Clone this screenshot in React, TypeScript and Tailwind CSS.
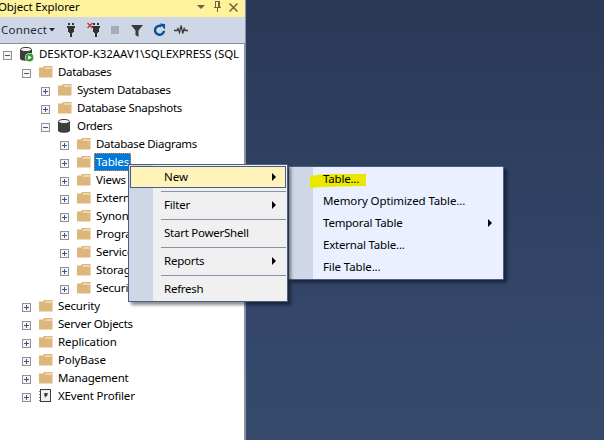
import React from "react";

type Kind = "server" | "folder" | "db" | "xe";
type Node = { label: string; depth: number; kind: Kind; open?: boolean; selected?: boolean; track: string };

const nodes: Node[] = [
  { label: "DESKTOP-K32AAV1\\SQLEXPRESS (SQL", depth: 0, kind: "server", open: true, track: "tracking-[-0.05px]" },
  { label: "Databases", depth: 1, kind: "folder", open: true, track: "tracking-[-0.35px]" },
  { label: "System Databases", depth: 2, kind: "folder", track: "tracking-[-0.3px]" },
  { label: "Database Snapshots", depth: 2, kind: "folder", track: "tracking-[-0.28px]" },
  { label: "Orders", depth: 2, kind: "db", open: true, track: "tracking-[-0.35px]" },
  { label: "Database Diagrams", depth: 3, kind: "folder", track: "tracking-[-0.3px]" },
  { label: "Tables", depth: 3, kind: "folder", selected: true, track: "tracking-[-0.15px]" },
  { label: "Views", depth: 3, kind: "folder", track: "tracking-[-0.15px]" },
  { label: "External", depth: 3, kind: "folder", track: "tracking-[-0.15px]" },
  { label: "Synonyms", depth: 3, kind: "folder", track: "tracking-[-0.15px]" },
  { label: "Program", depth: 3, kind: "folder", track: "tracking-[-0.15px]" },
  { label: "Service", depth: 3, kind: "folder", track: "tracking-[-0.15px]" },
  { label: "Storage", depth: 3, kind: "folder", track: "tracking-[-0.15px]" },
  { label: "Security", depth: 3, kind: "folder", track: "tracking-[-0.15px]" },
  { label: "Security", depth: 1, kind: "folder", track: "tracking-[-0.15px]" },
  { label: "Server Objects", depth: 1, kind: "folder", track: "tracking-[-0.25px]" },
  { label: "Replication", depth: 1, kind: "folder", track: "tracking-[-0.1px]" },
  { label: "PolyBase", depth: 1, kind: "folder", track: "tracking-[-0.1px]" },
  { label: "Management", depth: 1, kind: "folder", track: "tracking-[-0.2px]" },
  { label: "XEvent Profiler", depth: 1, kind: "xe", track: "tracking-[-0.17px]" },
];

const indent = ["pl-[3px]", "pl-[22px]", "pl-[41px]", "pl-[60px]"];

function Expander({ open }: { open?: boolean }) {
  return (
    <svg className="mt-[3px] shrink-0" width="9" height="9" viewBox="0 0 9 9" shapeRendering="crispEdges">
      <rect x=".5" y=".5" width="8" height="8" fill="#f6f6f6" stroke="#919191" />
      <path d="M2 4h5v1H2z" fill="#3b5391" />
      {!open && <path d="M4 2h1v5H4z" fill="#3b5391" />}
    </svg>
  );
}

function Cylinder() {
  return (
    <>
      <path d="M0 3.500v9c0 3 12 3 12 0v-9z" fill="#3c3c3c" />
      <ellipse cx="6" cy="3.500" rx="5.500" ry="2.100" fill="#f3f3f3" stroke="#3c3c3c" />
    </>
  );
}

function NodeIcon({ kind }: { kind: Kind }) {
  return (
    <svg className="ml-[8px] shrink-0" width="15" height="16" viewBox="0 0 15 16">
      {kind === "folder" && (
        <>
          <path d="M0 3.500h4L5 2h8.500v11.500H0z" fill="#dcb67a" />
          <path d="M5.500 4.500 6.200 3.500H13v1z" fill="#fbf3e2" />
        </>
      )}
      {kind === "db" && <Cylinder />}
      {kind === "server" && (
        <>
          <Cylinder />
          <circle cx="9.500" cy="11.500" r="4.500" fill="#fff" />
          <circle cx="9.500" cy="11.500" r="3.900" fill="#339933" />
          <path d="M8.200 9.200v4.600l3.500-2.300z" fill="#fff" />
        </>
      )}
      {kind === "xe" && (
        <>
          <rect x="1.500" y="1.500" width="10" height="12" fill="#f0f0f0" stroke="#3c3c3c" />
          <path d="M0 3.500h1M0 6.500h1M0 9.500h1M0 12.500h1" stroke="#777" />
          <path d="M5.500 5H9L8 6.800h1.200L5.500 10l.8-2.200H5z" fill="#3c3c3c" />
        </>
      )}
    </svg>
  );
}

function Plug({ off }: { off?: boolean }) {
  return (
    <svg className="overflow-visible" width="16" height="16" viewBox="0 0 16 16" shapeRendering="crispEdges">
      <path d="M5 1h2v2H5zM9 1h2v2H9zM4 4h8v2H4zM5 6h6v4H5zM6 10h4v1H6zM7 11h2v4H7z" fill="#333" />
      {off && <path d="M-.5 1 4.500 6M4.500 1-.5 6" stroke="#b8432f" strokeWidth="1.400" shapeRendering="auto" />}
    </svg>
  );
}

function Toolbar() {
  return (
    <div className="flex h-[26px] shrink-0 items-center bg-[#cfd6e5] pl-px text-[#1b293e]">
      <span className="w-[48px] tracking-[0.2px]">Connect</span>
      <svg width="6" height="4" viewBox="0 0 6 4"><path d="M0 0h6L3 3.500z" fill="#1b293e" /></svg>
      <span className="ml-[8px] flex"><Plug /></span>
      <span className="ml-[9px] flex"><Plug off /></span>
      <span className="ml-[7px] size-2 bg-[#a9acb8]" />
      <svg className="ml-[12px]" width="12" height="14" viewBox="0 0 12 14"><path d="M0 2h12L7.500 7.500V14L4.500 12V7.500z" fill="#3a3a3a" /></svg>
      <svg className="ml-[10px]" width="13" height="14" viewBox="0 0 13 14">
        <path d="M8.500 3.200A4.500 4.500 0 1 0 11 7.800" fill="none" stroke="#00539c" strokeWidth="2.400" />
        <path d="M6.500.5 12 1v5.500z" fill="#00539c" />
      </svg>
      <svg className="ml-[8px]" width="14" height="14" viewBox="0 0 14 14">
        <path d="M0 7.500h3l1-2 1.500 4L7.200 2.500l1.500 8 1.500-5 1 2H14" fill="none" stroke="#3a3a3a" strokeWidth="1.300" />
      </svg>
    </div>
  );
}

function Arrow({ className }: { className: string }) {
  return (
    <svg className={`ml-auto ${className}`} width="4" height="8" viewBox="0 0 4 8"><path d="M0 0v8l4-4z" fill="#000" /></svg>
  );
}

function MenuItem({ label, arrow, track }: { label: string; arrow?: boolean; track: string }) {
  return (
    <div className="h-[28px] border-t border-[#8492ac] pt-[2px]">
      <div className="flex h-[22px] items-center pl-[3px]">
        <span className={track}>{label}</span>
        {arrow && <Arrow className="mr-[10px]" />}
      </div>
    </div>
  );
}

function SubItem({ label, arrow, marked, track }: { label: string; arrow?: boolean; marked?: boolean; track: string }) {
  return (
    <div className="relative flex h-[22px] items-center pl-[10px]">
      {marked && (
        <svg className="absolute left-[-3px] top-[6px]" width="56" height="15" viewBox="0 0 56 15">
          <path d="M0 2 14 0H56v12L30 12.500 14 13 0 14z" fill="#ebe800" />
        </svg>
      )}
      <span className={`relative ${track}`}>{label}</span>
      {arrow && <Arrow className="mr-[11px]" />}
    </div>
  );
}

export default function App() {
  return (
    <div className="relative flex h-[440px] w-[604px] overflow-hidden whitespace-nowrap bg-linear-to-b from-[#2a3956] via-[#33466a] via-70% to-[#364b6b] font-['Noto_Sans','Open_Sans',sans-serif] text-[11.5px] leading-[18px] text-black">
      <aside className="flex w-[246px] shrink-0 flex-col border-r border-[#8593ae] bg-white">
        <header className="flex h-[17px] shrink-0 items-center bg-[#fff29d] pb-[3px]">
          <span className="-ml-[2px] tracking-[-0.12px]">Object Explorer</span>
          <svg className="ml-auto mr-[9px]" width="8" height="5" viewBox="0 0 8 5"><path d="M0 0h8L4 4z" fill="#75633d" /></svg>
          <svg className="mr-[8px] mt-[-1px]" width="7" height="11" viewBox="0 0 7 11" shapeRendering="crispEdges">
            <path d="M1 0h5v6h1v1H4v4H3V7H0V6h1zM2 1v5h2V1z" fill="#75633d" fillRule="evenodd" />
          </svg>
          <svg className="mr-[7px]" width="9" height="9" viewBox="0 0 9 9"><path d="m.5.5 8 8m0-8-8 8" stroke="#75633d" strokeWidth="1.500" /></svg>
        </header>
        <Toolbar />
        <div className="grow border-r border-t border-[#8a8f99] pt-px">
          {nodes.map((n, i) => (
            <div key={i} className={`flex h-[18px] items-center ${indent[n.depth]}`}>
              <Expander open={n.open} />
              <NodeIcon kind={n.kind} />
              <span className={`${n.track} ${n.selected ? "ml-[2px] h-[18px] w-[37px] border border-dotted border-[#ff8728] bg-[#0078d7] pl-px leading-[16px] text-white" : "ml-[4px]"}`}>{n.label}</span>
            </div>
          ))}
        </div>
      </aside>

      <div className="absolute left-[288px] top-[166px] h-[114px] w-[216px] border border-[#4a5f88] bg-linear-to-r from-[#cfd6e5] from-[24px] to-[#eaf0ff] to-[24px] pl-[24px] pt-px shadow-[3px_3px_3px_rgba(0,0,0,0.45)]">
        <SubItem label="Table..." marked track="tracking-[-0.2px]" />
        <SubItem label="Memory Optimized Table..." track="tracking-[-0.1px]" />
        <SubItem label="Temporal Table" arrow track="tracking-[-0.2px]" />
        <SubItem label="External Table..." track="tracking-[-0.2px]" />
        <SubItem label="File Table..." track="tracking-[-0.12px]" />
      </div>

      <div className="absolute left-[128px] top-[164px] h-[138px] w-[160px] border border-[#4a5f88] bg-linear-to-r from-[#cfd6e5] from-[24px] to-[#f0f0f0] to-[24px] p-px shadow-[3px_3px_3px_rgba(0,0,0,0.45)]">
        <div className="mb-[3px] flex h-[22px] items-center border border-[#4a5f88] bg-[#fff3b9] pl-[33px]">New<Arrow className="mr-[9px]" /></div>
        <div className="pl-[31px]">
          <MenuItem label="Filter" arrow track="tracking-[-0.2px]" />
          <MenuItem label="Start PowerShell" track="tracking-[-0.25px]" />
          <MenuItem label="Reports" arrow track="tracking-[-0.25px]" />
          <MenuItem label="Refresh" track="tracking-[-0.25px]" />
        </div>
      </div>
    </div>
  );
}
